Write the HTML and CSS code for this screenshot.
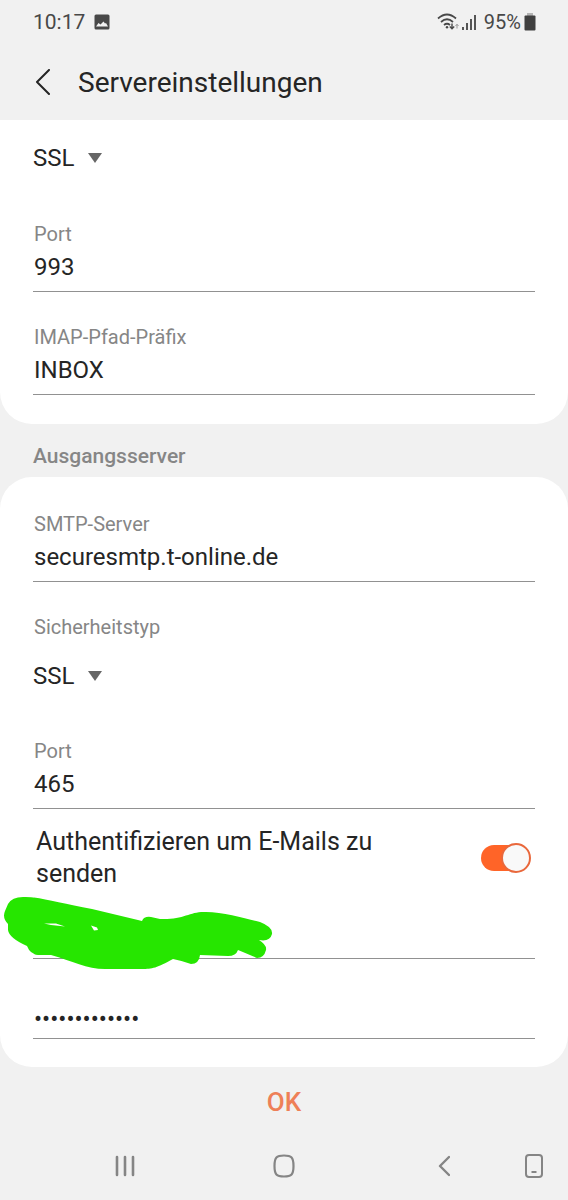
FILE: index.html
```html
<!DOCTYPE html>
<html lang="de">
<head>
<meta charset="utf-8">
<meta name="viewport" content="width=device-width, initial-scale=1">
<title>Servereinstellungen</title>
<link rel="stylesheet" href="styles.css">
</head>
<body>
<div class="status">
  <span>10:17</span>
  <svg class="status-picture" width="16" height="16" viewBox="0 0 16 16" aria-hidden="true"><rect x="0.5" y="0.5" width="15" height="15" rx="1.5" fill="#484848"/><path d="M2 12.500 4.500 9l2 1.500L9.500 7.500 11 9.500l1-.5 2 3.500z" fill="#f1f1f1"/></svg>
  <div class="status-right">
    <svg width="22" height="18" viewBox="0 0 22 18" fill="none" stroke="#484848" stroke-width="1.7" aria-hidden="true"><path d="M1 5.500Q10 -2.500 19 5.500M4 9Q10 3.500 16 9M7 12Q10 9.500 13 12"/><circle cx="10" cy="14.200" r="1.200" fill="#484848" stroke="none"/><path d="M15 10.500v5M12.800 13.500l2.200 2.200 2.200-2.200" stroke-width="1.400"/><path d="M20 15.500v-4M18.500 13l1.500-1.800 1.500 1.800" stroke="#999" stroke-width="1"/></svg>
    <svg width="15" height="16" viewBox="0 0 15 16" fill="#555" aria-hidden="true"><path d="M0 13h2v3H0zM4 9h2v7H4zM8 5h2v11H8zM12 1h2v15h-2z"/></svg>
    <span class="percent">95%</span>
    <svg width="12" height="18" viewBox="0 0 12 18" aria-hidden="true"><path d="M3 0h6v3H3z" fill="#b4b4b4"/><rect x="0.500" y="2.500" width="11" height="15" rx="1" fill="#404040"/></svg>
  </div>
</div>
<header class="bar">
  <button class="back" type="button" aria-label="Zurück"><svg width="16" height="26" viewBox="0 0 16 26" fill="none" stroke="#252525" stroke-width="2" stroke-linecap="round" stroke-linejoin="round"><path d="M14 1 2 13 14 25"/></svg></button>
  <h1 class="title">Servereinstellungen</h1>
</header>
<form class="form">
  <section class="card card-first">
    <div class="pick">
      <select class="select" aria-label="Sicherheitstyp"><option>SSL</option></select>
      <svg class="arrow" width="14" height="10" viewBox="0 0 14 10" aria-hidden="true"><path d="M0 0h14L7 10z" fill="#666"/></svg>
    </div>
    <div class="field after-pick">
      <label class="label" for="in-port">Port</label>
      <input class="input" id="in-port" type="text" value="993">
    </div>
    <div class="field">
      <label class="label" for="prefix">IMAP-Pfad-Präfix</label>
      <input class="input" id="prefix" type="text" value="INBOX">
    </div>
  </section>
  <h2 class="section">Ausgangsserver</h2>
  <section class="card card-second">
    <div>
      <label class="label" for="smtp">SMTP-Server</label>
      <input class="input" id="smtp" type="text" value="securesmtp.t-online.de">
    </div>
    <div class="field">
      <label class="label" for="out-type">Sicherheitstyp</label>
      <div class="pick">
        <select class="select" id="out-type"><option>SSL</option></select>
        <svg class="arrow" width="14" height="10" viewBox="0 0 14 10" aria-hidden="true"><path d="M0 0h14L7 10z" fill="#666"/></svg>
      </div>
    </div>
    <div class="field after-pick">
      <label class="label" for="out-port">Port</label>
      <input class="input" id="out-port" type="text" value="465">
    </div>
    <div class="auth">
      <label class="auth-text" for="auth">Authentifizieren um E-Mails zu senden</label>
      <input class="toggle" id="auth" type="checkbox" role="switch" checked>
    </div>
    <div class="user">
      <input class="input" type="text" aria-label="Benutzername">
      <svg class="scribble" width="270" height="74" viewBox="3 896 270 74" aria-hidden="true"><path fill="#26e600" fill-rule="evenodd" d="M8 904Q12 897 23 897C36 896 59 903 92 909L142 921Q144 916 151 917L160 919C184 920 190 911 206 912C224 912 247 919 260 922Q273 927 272 934Q270 942 259 940Q267 945 266 950Q264 958 257 958Q250 955 238 950Q236 956 228 956L200 955Q199 964 191 964Q183 961 173 959C157 968 152 969 142 969L105 969C87 969 72 961 51 955L38 955Q30 954 27 946Q9 938 8 930L8 924Q2 918 5 911ZM44 923.500 51 925 65 926.500 56 923.500ZM91 925.500 94 930.500 98 930 97 927.500Z"/></svg>
    </div>
    <div class="field">
      <input class="input password" type="password" aria-label="Passwort" value="geheimespassw">
    </div>
  </section>
  <div class="actions"><button class="ok" type="button">OK</button></div>
</form>
<nav class="nav" aria-label="Navigation">
  <button class="nav-btn recent" type="button" aria-label="Letzte Apps"><svg width="20" height="22" viewBox="0 0 20 22" fill="none" stroke="#858585" stroke-width="2.600" stroke-linecap="round"><path d="M2 2v18M10 2v18M18 2v18"/></svg></button>
  <button class="nav-btn home" type="button" aria-label="Startseite"><svg width="22" height="24" viewBox="0 0 22 24" fill="none" stroke="#858585" stroke-width="2.200"><path d="M11 1.500C18.500 1.500 20.500 3.500 20.500 12S18.500 22.500 11 22.500 1.500 20.500 1.500 12 3.500 1.500 11 1.500Z"/></svg></button>
  <button class="nav-btn prev" type="button" aria-label="Zurück"><svg width="12" height="22" viewBox="0 0 12 22" fill="none" stroke="#858585" stroke-width="2.400" stroke-linecap="round" stroke-linejoin="round"><path d="M11 2 2 11 11 20"/></svg></button>
  <button class="nav-btn device" type="button" aria-label="Gerät"><svg width="18" height="24" viewBox="0 0 18 24" fill="none" stroke="#858585" stroke-width="2"><rect x="1" y="1" width="16" height="22" rx="3"/><path d="M6.500 18h5"/></svg></button>
</nav>
</body>
</html>
```
FILE: styles.css
```css
*, *::before { box-sizing: border-box; }
body {
  margin: 0;
  background: #f1f1f1;
  color: #252525;
  font-family: Roboto, "Liberation Sans", sans-serif;
}
button, input, select { font: inherit; color: inherit; }
button { padding: 0; border: 0; background: none; }
svg { display: block; flex: none; }

.status {
  display: flex;
  align-items: center;
  height: 44px;
  padding: 0 32px 0 33px;
  color: #484848;
  font-size: 21px;
}
.status-picture { margin-left: 9px; }
.status-right { display: flex; align-items: center; gap: 3px; margin-left: auto; }
.percent { margin-left: 4px; font-size: 20px; }

.bar { display: flex; align-items: center; height: 76px; padding-left: 35px; }
.back { display: flex; }
.title { margin: 0; padding-left: 27px; font-size: 28px; font-weight: 400; }

.card { padding: 0 33px 29px; background: #fff; }
.card-first { padding-top: 2px; border-radius: 0 0 32px 32px; }
.card-second { padding-top: 34px; padding-bottom: 28px; border-radius: 32px; }
.section {
  margin: 0;
  padding: 20px 33px 9px;
  color: #868686;
  font-size: 21px;
  font-weight: 500;
  line-height: 24px;
}

.field { margin-top: 32px; }
.after-pick { margin-top: 38px; }
.label { display: block; padding-left: 1px; color: #868686; font-size: 20px; line-height: 26px; }
.card-first .after-pick { margin-top: 39px; }
.input {
  display: block;
  width: 100%;
  height: 45px;
  padding: 0 0 4px 1px;
  border: 0;
  border-bottom: 1px solid #919191;
  border-radius: 0;
  background: none;
  font-size: 24px;
  outline: 0;
}
.password { height: 48px; padding-top: 9px; padding-bottom: 0; }

.pick { display: inline-grid; align-items: center; margin-top: 12px; vertical-align: top; }
.select {
  grid-area: 1 / 1;
  height: 48px;
  padding: 0 27px 0 0;
  border: 0;
  background: none;
  appearance: none;
  font-size: 24px;
}
.arrow { grid-area: 1 / 1; justify-self: end; pointer-events: none; }

.auth { display: flex; align-items: center; justify-content: space-between; padding: 17px 4px 0 3px; }
.auth-text { max-width: 360px; font-size: 25px; line-height: 32px; }
.toggle {
  display: flex;
  align-items: center;
  justify-content: flex-end;
  width: 50px;
  height: 26px;
  margin: 0;
  border-radius: 13px;
  background: linear-gradient(to right, #ff6428 36px, transparent 36px);
  appearance: none;
}
.toggle::before {
  content: "";
  flex: none;
  width: 30px;
  height: 30px;
  border: 2px solid #e9683c;
  border-radius: 50%;
  background: #f9f9f9;
}

.user { position: relative; margin-top: 24px; }
.scribble { position: absolute; left: -30px; bottom: -11px; }

.actions { display: flex; justify-content: center; }
.ok { width: 160px; height: 69px; color: #ee8058; font-size: 26px; font-weight: 500; }

.nav {
  display: grid;
  grid-template-columns: 46fr 158fr 160fr 20fr 120fr 59fr 5fr;
  height: 60px;
}
.nav-btn { display: flex; align-items: center; justify-content: center; }
.recent { grid-column: 2; }
.home { grid-column: 3; }
.prev { grid-column: 5; }
.device { grid-column: 6; }
```
